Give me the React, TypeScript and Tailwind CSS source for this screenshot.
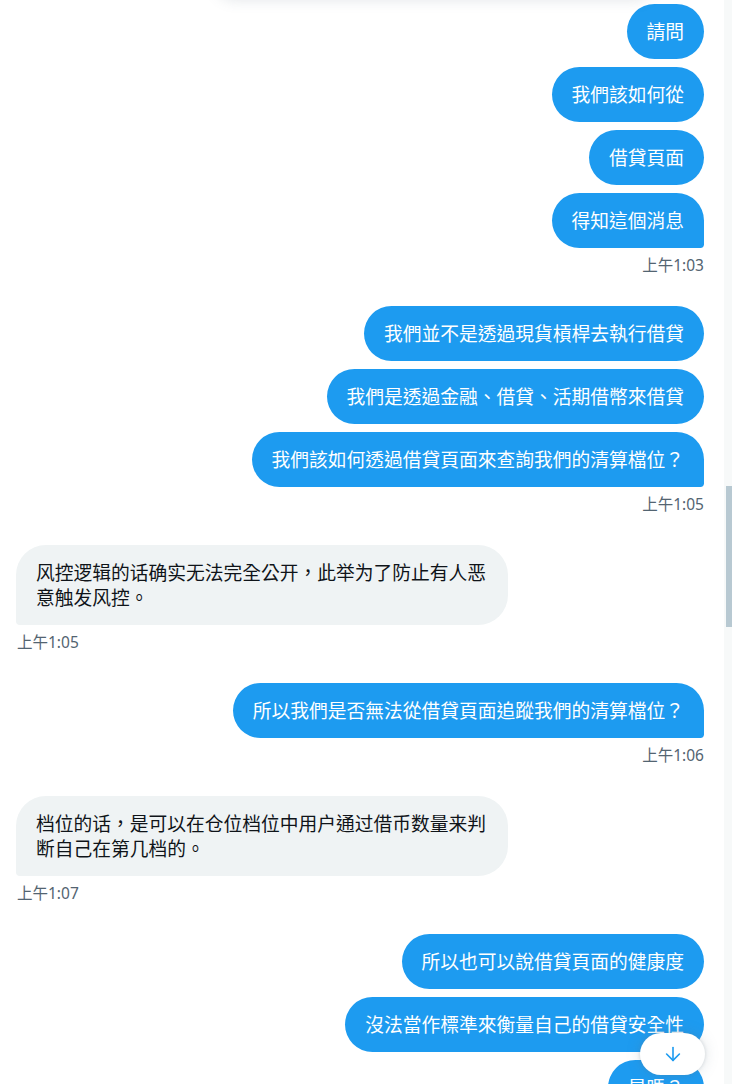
import { ArrowDown } from 'lucide-react'

interface GroupProps {
  side: 'sent' | 'received'
  messages: string[]
  time: string
  last?: boolean
}

const FONT = "font-['Noto_Sans','Noto_Sans_CJK_TC',sans-serif]"

function MessageGroup({ side, messages, time, last }: GroupProps) {
  const sent = side === 'sent'
  return (
    <div className={`flex flex-col ${sent ? 'items-end' : 'items-start'} ${last ? '' : 'mb-[31px]'}`}>
      <div className={`flex flex-col gap-2 ${sent ? 'items-end' : 'items-start'}`}>
        {messages.map((m, i) => {
          const isLast = i === messages.length - 1
          return (
            <div
              key={i}
              className={`max-w-[492px] px-5 py-[15px] text-[18.75px] leading-[25px] rounded-[30px] ${FONT} ${
                sent
                  ? `bg-[#1d9bf0] text-white ${isLast ? 'rounded-br-[4px]' : ''}`
                  : `bg-[#eff3f4] text-[#0f1419] ${isLast ? 'rounded-bl-[4px]' : ''}`
              }`}
            >
              {m}
            </div>
          )
        })}
      </div>
      {time && (
        <div className={`mt-[7px] text-[15.5px] leading-[20px] text-[#536471] ${FONT} ${sent ? '' : 'pl-[1px]'}`}>
          {time}
        </div>
      )}
    </div>
  )
}

export default function App() {
  return (
    <div className="relative flex h-[1084px] w-[732px] overflow-hidden bg-white">
      <div className="relative flex-1 overflow-hidden pl-4 pr-5 pt-[4px]">
        <MessageGroup side="sent" messages={['請問', '我們該如何從', '借貸頁面', '得知這個消息']} time="上午1:03" />
        <MessageGroup
          side="sent"
          messages={[
            '我們並不是透過現貨槓桿去執行借貸',
            '我們是透過金融、借貸、活期借幣來借貸',
            '我們該如何透過借貸頁面來查詢我們的清算檔位？',
          ]}
          time="上午1:05"
        />
        <MessageGroup
          side="received"
          messages={['风控逻辑的话确实无法完全公开，此举为了防止有人恶意触发风控。']}
          time="上午1:05"
        />
        <MessageGroup side="sent" messages={['所以我們是否無法從借貸頁面追蹤我們的清算檔位？']} time="上午1:06" />
        <MessageGroup
          side="received"
          messages={['档位的话，是可以在仓位档位中用户通过借币数量来判断自己在第几档的。']}
          time="上午1:07"
        />
        <MessageGroup
          side="sent"
          messages={['所以也可以說借貸頁面的健康度', '沒法當作標準來衡量自己的借貸安全性', '是嗎？']}
          time=""
          last
        />

        {/* shadow of the floating header above */}
        <div className="absolute left-[215px] top-[-40px] h-[40px] w-[440px] rounded-full bg-white shadow-[0_0_14px_rgba(101,119,134,0.18)]" />

        {/* scroll to bottom */}
        <button className="absolute left-[640px] top-[1033px] flex h-[42px] w-[65px] items-center justify-center rounded-full bg-white shadow-[0_0_15px_rgba(101,119,134,0.2),0_0_3px_1px_rgba(101,119,134,0.15)]">
          <ArrowDown size={22} strokeWidth={1.75} className="text-[#1d9bf0]" />
        </button>
      </div>

      {/* scrollbar */}
      <div className="flex w-2 flex-col items-end bg-[#f7f9f9]">
        <div className="h-[486px]" />
        <div className="h-[141px] w-[6px] bg-[#b8c9d2]" />
      </div>
    </div>
  )
}
